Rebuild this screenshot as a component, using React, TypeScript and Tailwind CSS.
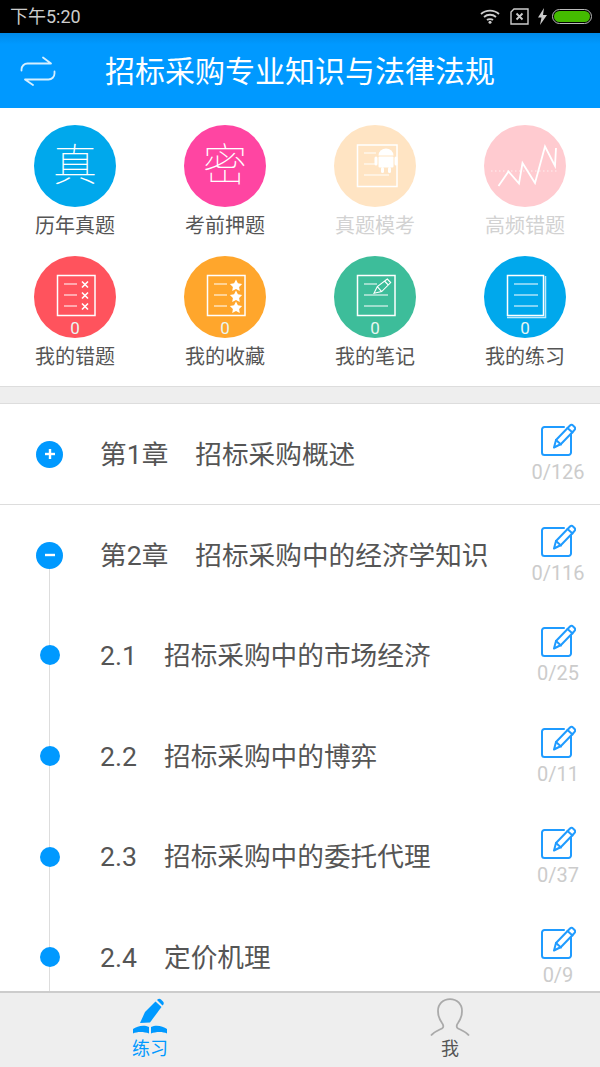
import React from 'react';

const FONT = 'font-["Roboto","Noto_Sans_CJK_SC",sans-serif]';

const DocFrame: React.FC<{ children?: React.ReactNode }> = ({ children }) => (
  <svg width="82" height="82" viewBox="0 0 82 82" className="absolute inset-0" fill="none" stroke="#fff">
    <rect x="23.5" y="19.5" width="37.5" height="40" strokeWidth="1.5" />
    {children}
  </svg>
);

const WrongIcon = () => (
  <DocFrame>
    <g strokeWidth="1.2">
      <path d="M30 28h13M30 39h13M30 50h13" />
      <path d="M48 25.5l6 6M54 25.5l-6 6M48 36.5l6 6M54 36.5l-6 6M48 47.5l6 6M54 47.5l-6 6" strokeWidth="1.6" />
    </g>
  </DocFrame>
);

const StarIcon = () => (
  <DocFrame>
    <path d="M30 28h13M30 39h13M30 50h13" strokeWidth="1.2" />
    <g fill="#fff" stroke="none">
      <path d="M52 23.5l1.9 3.8 4.2.6-3 3 .7 4.2-3.8-2-3.8 2 .7-4.2-3-3 4.2-.6z" />
      <path d="M52 34.5l1.9 3.8 4.2.6-3 3 .7 4.2-3.8-2-3.8 2 .7-4.2-3-3 4.2-.6z" />
      <path d="M52 45.5l1.9 3.8 4.2.6-3 3 .7 4.2-3.8-2-3.8 2 .7-4.2-3-3 4.2-.6z" />
    </g>
  </DocFrame>
);

const NoteIcon = () => (
  <DocFrame>
    <path d="M30 28h13M30 39h24M30 50h24" strokeWidth="1.2" />
    <path d="M40 37.300l3.300-6.700 10-7.600 3.400 3.600-9 9zM43.300 30.600l4.400 5M50.500 25l3.800 4" strokeWidth="1.100" />
  </DocFrame>
);

const PracticeIcon = () => (
  <svg width="82" height="82" viewBox="0 0 82 82" className="absolute inset-0" fill="none" stroke="#fff">
    <path d="M61.500 20v41.500H23" stroke="#bfe9fb" strokeWidth="1.500" />
    <rect x="23.500" y="19.500" width="36" height="40" strokeWidth="1.500" />
    <path d="M30 28h24M30 39h24M30 50h24" strokeWidth="1.200" />
  </svg>
);

const AndroidMockIcon = () => (
  <svg width="82" height="82" viewBox="0 0 82 82" className="absolute inset-0" fill="none" stroke="#fff">
    <rect x="23.500" y="20" width="39.500" height="41.500" strokeWidth="1.500" />
    <path d="M30 28h12M30 39h12M30 50h25" strokeWidth="1.200" />
    <g fill="#fff" stroke="none">
      <path d="M44.500 30.500a7.500 7 0 0 1 15 0z" />
      <rect x="44.500" y="31.500" width="15" height="11" rx="1" />
      <rect x="40.500" y="31.500" width="3" height="9" rx="1.500" />
      <rect x="60.500" y="31.500" width="3" height="9" rx="1.500" />
      <rect x="47" y="42" width="3" height="6" rx="1.500" />
      <rect x="54" y="42" width="3" height="6" rx="1.500" />
    </g>
  </svg>
);

const ChartIcon = () => (
  <svg width="82" height="82" viewBox="0 0 82 82" className="absolute inset-0" fill="none" stroke="#fff">
    <path d="M7 46h68" strokeWidth="1" strokeDasharray="1.500 2.500" opacity="0.7" />
    <path d="M14.500 61l10-14.500L35 58.500 38.500 38 51 58 61 21.500 71 41l1-18" strokeWidth="1.800" />
  </svg>
);

interface GridItem {
  label: string;
  bg: string;
  glyph?: string;
  icon?: React.ReactNode;
  count?: boolean;
  muted?: boolean;
}

const gridItems: GridItem[] = [
  { label: '历年真题', bg: 'bg-[#00a8ec]', glyph: '真' },
  { label: '考前押题', bg: 'bg-[#ff45a2]', glyph: '密' },
  { label: '真题模考', bg: 'bg-[#ffe4c3]', icon: <AndroidMockIcon />, muted: true },
  { label: '高频错题', bg: 'bg-[#ffcbd0]', icon: <ChartIcon />, muted: true },
  { label: '我的错题', bg: 'bg-[#ff535d]', icon: <WrongIcon />, count: true },
  { label: '我的收藏', bg: 'bg-[#ffa62c]', icon: <StarIcon />, count: true },
  { label: '我的笔记', bg: 'bg-[#3dbd9a]', icon: <NoteIcon />, count: true },
  { label: '我的练习', bg: 'bg-[#00a8ec]', icon: <PracticeIcon />, count: true },
];

const EditIcon = () => (
  <svg width="36" height="36" viewBox="0 0 36 36" fill="none" stroke="#1f9bff" strokeWidth="2" strokeLinejoin="round" strokeLinecap="round" className="-mt-[2px] mb-[2px]">
    <path d="M24 5H4.500A2.500 2.500 0 0 0 2 7.500v23A2.500 2.500 0 0 0 4.500 33h24a2.500 2.500 0 0 0 2.500-2.500V12" />
    <path d="M14 25.500l2-7.500L30 3.500c1-1 2.200-1 3 0l1.500 1.500c.8.8.8 2 0 3L21 22z" />
    <path d="M16 18l5 4.500M27.500 6l5 4.500" />
  </svg>
);

const Row: React.FC<{ left: React.ReactNode; num: string; numClass: string; title: string; count: string; rowClass: string }> = ({
  left,
  num,
  numClass,
  title,
  count,
  rowClass,
}) => (
  <div className={`flex items-center ${rowClass}`}>
    <div className="w-[100px] flex justify-center pr-[1px] shrink-0">{left}</div>
    <div className="flex-1 flex items-center pt-[2px] text-[26.67px] leading-none text-[#555] whitespace-nowrap">
      <span className={numClass}>{num}</span>
      <span>{title}</span>
    </div>
    <div className="w-[84px] shrink-0 flex flex-col items-center">
      <EditIcon />
      <span className="text-[20px] leading-[24px] text-[#ccc]">{count}</span>
    </div>
  </div>
);

const ToggleDot: React.FC<{ minus?: boolean }> = ({ minus }) => (
  <div className="w-[27px] h-[27px] rounded-full bg-[#0099ff] flex items-center justify-center">
    <svg width="14" height="14" viewBox="0 0 14 14" stroke="#fff" strokeWidth="2.400">
      <path d="M2 7h10" />
      {!minus && <path d="M7 2v10" />}
    </svg>
  </div>
);

const Dot = () => <div className="w-[20px] h-[20px] rounded-full bg-[#0099ff]" />;

const subRows = [
  { num: '2.1', title: '招标采购中的市场经济', count: '0/25' },
  { num: '2.2', title: '招标采购中的博弈', count: '0/11' },
  { num: '2.3', title: '招标采购中的委托代理', count: '0/37' },
  { num: '2.4', title: '定价机理', count: '0/9' },
];

export default function App() {
  return (
    <div className={`w-[600px] h-[1067px] flex flex-col overflow-hidden bg-white ${FONT}`}>
      {/* status bar */}
      <div className="h-[33px] shrink-0 bg-black flex items-center justify-between pl-[10px] pr-[8px] text-[#ccc]">
        <span className="text-[18px] leading-none">下午5:20</span>
        <div className="flex items-center">
          <svg width="20" height="15" viewBox="0 0 20 15" fill="none" stroke="#ccc" strokeWidth="1.800">
            <path d="M1 5c5-4.500 13-4.500 18 0M4 8c3.500-3 8.500-3 12 0M7 11c1.500-1.300 4.500-1.300 6 0" />
            <circle cx="10" cy="13.300" r="1.500" fill="#ccc" stroke="none" />
          </svg>
          <svg width="19" height="17" viewBox="0 0 19 17" fill="none" stroke="#ccc" className="ml-[10px]">
            <path d="M4 1h14v15H1V4z" strokeWidth="1.400" />
            <path d="M6.500 5.500l6 6M12.500 5.500l-6 6" strokeWidth="1.800" />
          </svg>
          <svg width="9" height="17" viewBox="0 0 9 17" fill="#ccc" className="ml-[9px]">
            <path d="M6 0L0 9.500h3.500L2 17l7-10H5z" />
          </svg>
          <div className="ml-[5px] w-[40px] h-[15px] rounded-full border border-[#bbb] p-[1px] flex">
            <div className="flex-1 rounded-full bg-[#44bb00]" />
          </div>
        </div>
      </div>

      {/* header */}
      <div className="h-[75px] shrink-0 bg-linear-to-b from-[#008ae8] via-[#0099ff] via-[15%] to-[#0099ff] flex items-center">
        <div className="w-[105px] shrink-0 pl-[20px]">
          <svg width="36" height="30" viewBox="0 0 36 30" fill="none" stroke="#d5efff" strokeWidth="1.800" strokeLinecap="round" strokeLinejoin="round">
            <path d="M1.500 14.500v-1a6 6 0 0 1 6-6H31L23 1.500" />
            <path d="M34.500 15.500v2a6 6 0 0 1-6 6H5l8 5.500" />
          </svg>
        </div>
        <span className="pt-[2px] text-[30px] leading-none text-white whitespace-nowrap">招标采购专业知识与法律法规</span>
      </div>

      {/* shortcuts */}
      <div className="shrink-0 grid grid-cols-4 gap-y-[18px] pt-[17px] pb-[17px]">
        {gridItems.map((item) => (
          <div key={item.label} className="flex flex-col items-center">
            <div className={`relative w-[82px] h-[82px] rounded-full flex items-center justify-center ${item.bg}`}>
              {item.glyph && <span className="text-[44px] leading-none font-thin text-white">{item.glyph}</span>}
              {item.icon}
              {item.count && (
                <span className="absolute left-0 right-0 bottom-0 text-center text-[17px] leading-[20px] text-[#e8f6f2]">0</span>
              )}
            </div>
            <span className={`mt-[7px] text-[20px] leading-[24px] ${item.muted ? 'text-[#d2d2d2]' : 'text-[#555]'}`}>{item.label}</span>
          </div>
        ))}
      </div>

      <div className="h-[18px] shrink-0 bg-[#eee] border-y border-[#ddd]" />

      {/* chapter list */}
      <div className="flex-1 min-h-0 overflow-hidden">
        <Row
          left={<ToggleDot />}
          num="第1章"
          numClass="mr-[27px]"
          title="招标采购概述"
          count="0/126"
          rowClass="h-[101px] border-b border-[#ddd]"
        />
        <div className="relative">
          {/* timeline behind the dots */}
          <div className="absolute left-[49px] top-[50px] bottom-0 w-[1px] bg-[#ddd]" />
          <div className="relative">
            <Row
              left={<ToggleDot minus />}
              num="第2章"
              numClass="mr-[27px]"
              title="招标采购中的经济学知识"
              count="0/116"
              rowClass="h-[100px]"
            />
            {subRows.map((r) => (
              <Row
                key={r.num}
                left={<Dot />}
                num={r.num}
                numClass="mr-[27px]"
                title={r.title}
                count={r.count}
                rowClass="h-[100.67px]"
              />
            ))}
          </div>
        </div>
      </div>

      {/* bottom tabs */}
      <div className="h-[76px] shrink-0 bg-[#eee] border-t-2 border-[#ccc] flex">
        <div className="w-[300px] flex flex-col items-center">
          <svg width="36" height="38" viewBox="0 0 36 38" fill="#0099ff" className="mt-[5px]">
            <path d="M8 25l5-11L23.500 3.500 29.500 9 18 24.500z" />
            <path d="M25.500 1.500c1-1 2.500-1 3.500 0l2 2c1 1 1 2.500 0 3.500l-.500.500-5.500-5.500z" />
            <path d="M1 35.500V31c4-3 11-4.500 16-2v6.500c-5-2-12-2-16 0zM19 29c5-2.500 12-1 16 2v4.500c-4-2-11-2-16 0z" />
          </svg>
          <span className="text-[18px] leading-[20px] text-[#0099ff] mt-[3px]">练习</span>
        </div>
        <div className="w-[300px] flex flex-col items-center">
          <svg width="40" height="38" viewBox="0 0 40 38" fill="none" stroke="#aaa" strokeWidth="1.800" className="mt-[5px]">
            <path d="M1 37.500c3-4 7-5 11-7 2-1 1.500-3.500 0-5.500C9.500 21.500 8 17.500 8 13 8 6 13 1.200 20 1.200S32 6 32 13c0 4.500-1.500 8.500-4 12-1.500 2-2 4.500 0 5.500 4 2 8 3 11 7" />
          </svg>
          <span className="text-[18px] leading-[20px] text-[#555] mt-[3px]">我</span>
        </div>
      </div>
    </div>
  );
}
